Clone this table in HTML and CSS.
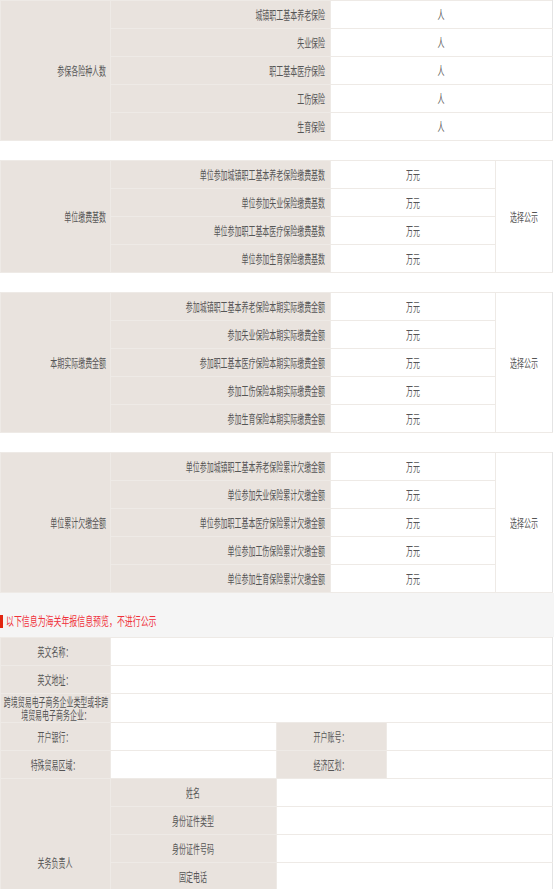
FILE: index.html
```html
<!DOCTYPE html>
<html lang="zh-CN">
<head>
<meta charset="utf-8">
<title>年报预览</title>
<link rel="stylesheet" href="styles.css">
</head>
<body>
<div class="page">
  <table class="tb tb3">
    <colgroup><col class="w1"><col class="w2"><col class="w3"></colgroup>
    <tr><td class="lab g" rowspan="5"><div class="r"><span class="t">参保各险种人数</span></div></td>
        <td class="lab"><div class="r"><span class="t">城镇职工基本养老保险</span></div></td>
        <td class="val"><div class="c"><span class="t">人</span></div></td></tr>
    <tr><td class="lab"><div class="r"><span class="t">失业保险</span></div></td>
        <td class="val"><div class="c"><span class="t">人</span></div></td></tr>
    <tr><td class="lab"><div class="r"><span class="t">职工基本医疗保险</span></div></td>
        <td class="val"><div class="c"><span class="t">人</span></div></td></tr>
    <tr><td class="lab"><div class="r"><span class="t">工伤保险</span></div></td>
        <td class="val"><div class="c"><span class="t">人</span></div></td></tr>
    <tr><td class="lab"><div class="r"><span class="t">生育保险</span></div></td>
        <td class="val"><div class="c"><span class="t">人</span></div></td></tr>
  </table>

  <table class="tb tb4">
    <colgroup><col class="w1"><col class="w2"><col class="w3b"><col class="w4"></colgroup>
    <tr><td class="lab g" rowspan="4"><div class="r"><span class="t">单位缴费基数</span></div></td>
        <td class="lab"><div class="r"><span class="t">单位参加城镇职工基本养老保险缴费基数</span></div></td>
        <td class="val"><div class="c"><span class="t">万元</span></div></td>
        <td class="val" rowspan="4"><div class="c"><span class="t">选择公示</span></div></td></tr>
    <tr><td class="lab"><div class="r"><span class="t">单位参加失业保险缴费基数</span></div></td>
        <td class="val"><div class="c"><span class="t">万元</span></div></td></tr>
    <tr><td class="lab"><div class="r"><span class="t">单位参加职工基本医疗保险缴费基数</span></div></td>
        <td class="val"><div class="c"><span class="t">万元</span></div></td></tr>
    <tr><td class="lab"><div class="r"><span class="t">单位参加生育保险缴费基数</span></div></td>
        <td class="val"><div class="c"><span class="t">万元</span></div></td></tr>
  </table>

  <table class="tb tb4">
    <colgroup><col class="w1"><col class="w2"><col class="w3b"><col class="w4"></colgroup>
    <tr><td class="lab g" rowspan="5"><div class="r"><span class="t">本期实际缴费金额</span></div></td>
        <td class="lab"><div class="r"><span class="t">参加城镇职工基本养老保险本期实际缴费金额</span></div></td>
        <td class="val"><div class="c"><span class="t">万元</span></div></td>
        <td class="val" rowspan="5"><div class="c"><span class="t">选择公示</span></div></td></tr>
    <tr><td class="lab"><div class="r"><span class="t">参加失业保险本期实际缴费金额</span></div></td>
        <td class="val"><div class="c"><span class="t">万元</span></div></td></tr>
    <tr><td class="lab"><div class="r"><span class="t">参加职工基本医疗保险本期实际缴费金额</span></div></td>
        <td class="val"><div class="c"><span class="t">万元</span></div></td></tr>
    <tr><td class="lab"><div class="r"><span class="t">参加工伤保险本期实际缴费金额</span></div></td>
        <td class="val"><div class="c"><span class="t">万元</span></div></td></tr>
    <tr><td class="lab"><div class="r"><span class="t">参加生育保险本期实际缴费金额</span></div></td>
        <td class="val"><div class="c"><span class="t">万元</span></div></td></tr>
  </table>

  <table class="tb tb4 last">
    <colgroup><col class="w1"><col class="w2"><col class="w3b"><col class="w4"></colgroup>
    <tr><td class="lab g" rowspan="5"><div class="r"><span class="t">单位累计欠缴金额</span></div></td>
        <td class="lab"><div class="r"><span class="t">单位参加城镇职工基本养老保险累计欠缴金额</span></div></td>
        <td class="val"><div class="c"><span class="t">万元</span></div></td>
        <td class="val" rowspan="5"><div class="c"><span class="t">选择公示</span></div></td></tr>
    <tr><td class="lab"><div class="r"><span class="t">单位参加失业保险累计欠缴金额</span></div></td>
        <td class="val"><div class="c"><span class="t">万元</span></div></td></tr>
    <tr><td class="lab"><div class="r"><span class="t">单位参加职工基本医疗保险累计欠缴金额</span></div></td>
        <td class="val"><div class="c"><span class="t">万元</span></div></td></tr>
    <tr><td class="lab"><div class="r"><span class="t">单位参加工伤保险累计欠缴金额</span></div></td>
        <td class="val"><div class="c"><span class="t">万元</span></div></td></tr>
    <tr><td class="lab"><div class="r"><span class="t">单位参加生育保险累计欠缴金额</span></div></td>
        <td class="val"><div class="c"><span class="t">万元</span></div></td></tr>
  </table>
</div>

<div class="notice">
  <span class="mark"></span><span class="t tr">以下信息为海关年报信息预览，不进行公示</span>
</div>

<div class="page">
  <table class="tb tb5">
    <colgroup><col class="c1"><col class="c2"><col class="c3"><col class="c4"></colgroup>
    <tr><td class="lab"><div class="c"><span class="t">英文名称：</span></div></td><td class="val" colspan="3"></td></tr>
    <tr><td class="lab"><div class="c"><span class="t">英文地址：</span></div></td><td class="val" colspan="3"></td></tr>
    <tr class="two"><td class="lab"><div class="c"><span class="t tl">跨境贸易电子商务企业类型或非跨<br>境贸易电子商务企业：</span></div></td><td class="val" colspan="3"></td></tr>
    <tr><td class="lab"><div class="c"><span class="t">开户银行：</span></div></td><td class="val"></td>
        <td class="lab"><div class="c"><span class="t">开户账号：</span></div></td><td class="val"></td></tr>
    <tr><td class="lab"><div class="c"><span class="t">特殊贸易区域：</span></div></td><td class="val"></td>
        <td class="lab"><div class="c"><span class="t">经济区划：</span></div></td><td class="val"></td></tr>
    <tr><td class="lab" rowspan="6"><div class="c"><span class="t">关务负责人</span></div></td>
        <td class="lab"><div class="c"><span class="t">姓名</span></div></td><td class="val" colspan="2"></td></tr>
    <tr><td class="lab"><div class="c"><span class="t">身份证件类型</span></div></td><td class="val" colspan="2"></td></tr>
    <tr><td class="lab"><div class="c"><span class="t">身份证件号码</span></div></td><td class="val" colspan="2"></td></tr>
    <tr><td class="lab"><div class="c"><span class="t">固定电话</span></div></td><td class="val" colspan="2"></td></tr>
    <tr><td class="lab"><div class="c"><span class="t">移动电话</span></div></td><td class="val" colspan="2"></td></tr>
    <tr><td class="lab"><div class="c"><span class="t">电子邮箱</span></div></td><td class="val" colspan="2"></td></tr>
  </table>
</div>
</body>
</html>
```

FILE: styles.css
```css
html, body {
  margin: 0;
  padding: 0;
  background: #fff;
}
body {
  font-family: "Noto Sans CJK SC", "Noto Sans", sans-serif;
  font-size: 12px;
  color: #555;
  width: 554px;
}
.page {
  width: 552px;
}
.tb {
  width: 552px;
  table-layout: fixed;
  border-collapse: collapse;
  margin: 0 0 19px 0;
}
.tb.last {
  margin-bottom: 0;
}
.tb td {
  height: 27px;
  padding: 0;
  border: 1px solid #eeeae6;
  vertical-align: middle;
  overflow: visible;
}
.tb tr.two td {
  height: 28px;
}
.w1, .c1 { width: 110px; }
.w2 { width: 220px; }
.w3 { width: 222px; }
.w3b { width: 165px; }
.w4 { width: 57px; }
.c2 { width: 166px; }
.c3 { width: 110px; }
.c4 { width: 166px; }

.lab {
  background: #e9e3de;
}
.val {
  background: #fff;
}
.tb td:last-child {
  border-right-color: #e4e4e4;
}
.r {
  display: flex;
  justify-content: flex-end;
  padding-right: 5px;
}
.g .r {
  padding-right: 4px;
}
.c {
  display: flex;
  justify-content: center;
}
.t {
  display: inline-block;
  white-space: nowrap;
  line-height: 14px;
  transform: scaleX(0.58);
}
.r .t {
  transform-origin: right center;
}
.c .t {
  transform-origin: center center;
}
.t.tl {
  text-align: center;
  line-height: 13px;
}
.notice {
  background: #f5f5f5;
  height: 44px;
  box-sizing: border-box;
  padding-top: 20px;
  display: flex;
  align-items: flex-start;
}
.mark {
  display: block;
  width: 3px;
  height: 13px;
  margin-top: 2px;
  background: #e1250f;
}
.t.tr {
  color: #f0303a;
  font-size: 12px;
  line-height: 16px;
  margin-left: 3px;
  transform: scaleX(0.66);
  transform-origin: left center;
}
```
